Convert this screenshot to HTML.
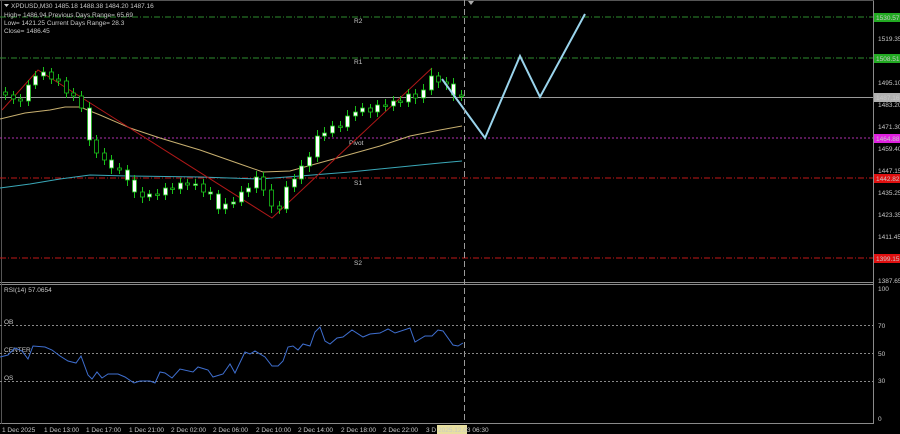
<!DOCTYPE html>
<html><head><meta charset="utf-8"><style>
html,body{margin:0;padding:0;background:#000;width:900px;height:434px;overflow:hidden}
svg{display:block}
text{font-family:"Liberation Sans",sans-serif;font-size:6.5px;fill:#c8c8c8}
.b{fill:#fff;stroke:#19c019;stroke-width:0.8}
.r{fill:#000;stroke:#19c019;stroke-width:0.8}
</style></head><body>
<svg width="900" height="434" xmlns="http://www.w3.org/2000/svg">
<rect width="900" height="434" fill="#000"/>
<line x1="873.5" y1="0" x2="873.5" y2="424" stroke="#8a8a8a"/>
<line x1="0" y1="282.5" x2="874" y2="282.5" stroke="#8a8a8a"/>
<line x1="0" y1="284.5" x2="874" y2="284.5" stroke="#8a8a8a"/>
<line x1="0" y1="0.5" x2="874" y2="0.5" stroke="#555"/>
<line x1="0" y1="423.5" x2="874" y2="423.5" stroke="#8a8a8a"/>
<line x1="1.5" y1="0" x2="1.5" y2="424" stroke="#555"/>
<line x1="0" y1="17" x2="873" y2="17" stroke="#2e8b2e" stroke-dasharray="6,2,1,2"/>
<line x1="0" y1="58" x2="873" y2="58" stroke="#2e8b2e" stroke-dasharray="6,2,1,2"/>
<line x1="0" y1="97.5" x2="873" y2="97.5" stroke="#9a9a9a"/>
<line x1="0" y1="138" x2="873" y2="138" stroke="#b030b0" stroke-dasharray="2,2"/>
<line x1="0" y1="178" x2="873" y2="178" stroke="#c01818" stroke-dasharray="6,2,1,2"/>
<line x1="0" y1="258" x2="873" y2="258" stroke="#c01818" stroke-dasharray="6,2,1,2"/>
<text x="354" y="23">R2</text><text x="354" y="64">R1</text>
<text x="349" y="145">Pivot</text><text x="354" y="185">S1</text><text x="354" y="265">S2</text>
<polyline fill="none" stroke="#c8b070" stroke-width="1" points="0,119 25,113 50,110 65,107 80,107 100,115 130,128 160,138 200,150 240,164 263,172 290,171 330,160 380,146 410,136 440,130 462,126"/>
<polyline fill="none" stroke="#3aa8b8" stroke-width="1" points="0,188 30,184 60,179 90,175 130,176 200,177 260,179 300,176 350,172 400,167 440,163 462,161"/>
<polyline fill="none" stroke="#b01818" stroke-width="1" points="2,110 38,70 272,218 432,68"/>
<path fill="none" stroke="#19c019" stroke-width="1" d="M5.5 87V100M13.5 91V104M20.5 94V107M28.5 80V106M35.5 71V89M43.5 67V80M51.5 68V84M58.5 74V86M66.5 77V98M73.5 88V101M81.5 91V112M89.5 102V146M96.5 135V158M104.5 148V165M111.5 155V174M119.5 163V174M127.5 165V186M134.5 175V198M142.5 187V203M149.5 190V201M157.5 189V200M165.5 183V200M172.5 183V194M180.5 178V194M187.5 179V190M195.5 179V190M203.5 179V197M210.5 187V200M218.5 190V214M225.5 198V214M233.5 197V208M241.5 186V206M248.5 183V197M256.5 171V193M263.5 172V196M271.5 184V213M279.5 201V214M286.5 181V213M294.5 174V192M301.5 160V184M309.5 152V172M317.5 130V162M324.5 127V141M332.5 121V137M340.5 121V132M347.5 110V131M355.5 106V121M362.5 103V116M370.5 104V118M377.5 100V117M385.5 99V111M393.5 96V111M400.5 96V107M408.5 89V107M415.5 89V104M423.5 84V103M431.5 68V95M438.5 72V88M446.5 77V90M453.5 78V101M461.5 90V101"/>
<rect class="r" x="3.5" y="92" width="4" height="3"/>
<rect class="r" x="11.5" y="95" width="4" height="4"/>
<rect class="r" x="18.5" y="99" width="4" height="2"/>
<rect class="b" x="26.5" y="85" width="4" height="16"/>
<rect class="b" x="33.5" y="76" width="4" height="9"/>
<rect class="b" x="41.5" y="72" width="4" height="4"/>
<rect class="r" x="49.5" y="72" width="4" height="7"/>
<rect class="r" x="56.5" y="79" width="4" height="2"/>
<rect class="r" x="64.5" y="81" width="4" height="12"/>
<rect class="r" x="71.5" y="93" width="4" height="3"/>
<rect class="r" x="79.5" y="96" width="4" height="12"/>
<rect class="b" x="87.5" y="108" width="4" height="32"/>
<rect class="r" x="94.5" y="140" width="4" height="13"/>
<rect class="r" x="102.5" y="153" width="4" height="7"/>
<rect class="b" x="109.5" y="160" width="4" height="8"/>
<rect class="r" x="117.5" y="168" width="4" height="2"/>
<rect class="b" x="125.5" y="170" width="4" height="10"/>
<rect class="b" x="132.5" y="180" width="4" height="12"/>
<rect class="r" x="140.5" y="192" width="4" height="5"/>
<rect class="b" x="147.5" y="194" width="4" height="3"/>
<rect class="r" x="155.5" y="194" width="4" height="1.5"/>
<rect class="b" x="163.5" y="188" width="4" height="7"/>
<rect class="r" x="170.5" y="188" width="4" height="1.5"/>
<rect class="b" x="178.5" y="183" width="4" height="6"/>
<rect class="r" x="185.5" y="183" width="4" height="2"/>
<rect class="b" x="193.5" y="184" width="4" height="1.5"/>
<rect class="r" x="201.5" y="184" width="4" height="8"/>
<rect class="b" x="208.5" y="192" width="4" height="2"/>
<rect class="b" x="216.5" y="194" width="4" height="15"/>
<rect class="b" x="223.5" y="204" width="4" height="5"/>
<rect class="b" x="231.5" y="202" width="4" height="2"/>
<rect class="b" x="239.5" y="192" width="4" height="10"/>
<rect class="b" x="246.5" y="188" width="4" height="4"/>
<rect class="b" x="254.5" y="177" width="4" height="11"/>
<rect class="r" x="261.5" y="177" width="4" height="13"/>
<rect class="r" x="269.5" y="190" width="4" height="16"/>
<rect class="r" x="277.5" y="206" width="4" height="3"/>
<rect class="b" x="284.5" y="187" width="4" height="22"/>
<rect class="b" x="292.5" y="179" width="4" height="8"/>
<rect class="b" x="299.5" y="166" width="4" height="13"/>
<rect class="b" x="307.5" y="157" width="4" height="9"/>
<rect class="b" x="315.5" y="136" width="4" height="21"/>
<rect class="b" x="322.5" y="133" width="4" height="3"/>
<rect class="b" x="330.5" y="126" width="4" height="7"/>
<rect class="r" x="338.5" y="126" width="4" height="1.5"/>
<rect class="b" x="345.5" y="116" width="4" height="11"/>
<rect class="b" x="353.5" y="112" width="4" height="4"/>
<rect class="b" x="360.5" y="108" width="4" height="4"/>
<rect class="r" x="368.5" y="108" width="4" height="4"/>
<rect class="b" x="375.5" y="105" width="4" height="7"/>
<rect class="r" x="383.5" y="105" width="4" height="1.5"/>
<rect class="b" x="391.5" y="101" width="4" height="5"/>
<rect class="r" x="398.5" y="101" width="4" height="1.5"/>
<rect class="b" x="406.5" y="94" width="4" height="8"/>
<rect class="r" x="413.5" y="94" width="4" height="4"/>
<rect class="b" x="421.5" y="90" width="4" height="8"/>
<rect class="b" x="429.5" y="76" width="4" height="14"/>
<rect class="r" x="436.5" y="76" width="4" height="6"/>
<rect class="r" x="444.5" y="82" width="4" height="2"/>
<rect class="b" x="451.5" y="84" width="4" height="11"/>
<rect class="r" x="459.5" y="95" width="4" height="1.5"/>
<polyline fill="none" stroke="#9ad4ec" stroke-width="2" points="442,79 485,138 520,56 540,97 585,14"/>
<line x1="464.5" y1="0" x2="464.5" y2="424" stroke="#9a9a9a" stroke-dasharray="6,3"/>
<polygon points="468,1 474,1 471,5" fill="#aaa"/>
<polygon points="4,4 9,4 6.5,7" fill="#ccc"/>
<text x="11" y="8">XPDUSD,M30  1485.18 1488.38 1484.20 1487.16</text>
<text x="4" y="17">High= 1486.94    Previous Days Range= 65.69</text>
<text x="4" y="25">Low= 1421.25    Current Days Range= 28.3</text>
<text x="4" y="33">Close= 1486.45</text>
<rect x="874" y="13" width="26" height="9" fill="#22aa22"/><text x="876" y="20" fill="#003300">1530.57</text>
<text x="878" y="41">1519.35</text>
<rect x="874" y="54" width="26" height="9" fill="#22aa22"/><text x="876" y="61" fill="#003300">1508.51</text>
<text x="878" y="85">1495.10</text>
<rect x="874" y="93" width="26" height="9" fill="#b0b0b0"/><text x="876" y="100" fill="#222">1487.16</text>
<text x="878" y="107">1483.20</text>
<text x="878" y="129">1471.30</text>
<rect x="874" y="134" width="26" height="9" fill="#e020e0"/><text x="876" y="141" fill="#500050">1464.88</text>
<text x="878" y="151">1459.40</text>
<text x="878" y="173">1447.15</text>
<rect x="874" y="174" width="26" height="9" fill="#e01010"/><text x="876" y="181" fill="#500000">1442.82</text>
<text x="878" y="195">1435.25</text>
<text x="878" y="217">1423.35</text>
<text x="878" y="239">1411.45</text>
<rect x="874" y="254" width="26" height="9" fill="#e01010"/><text x="876" y="261" fill="#500000">1399.15</text>
<text x="878" y="283">1387.65</text>
<text x="878" y="291">100</text>
<text x="878" y="328">70</text>
<text x="878" y="356">50</text>
<text x="878" y="383">30</text>
<text x="878" y="421">0</text>
<text x="4" y="292">RSI(14) 57.0654</text>
<line x1="0" y1="325.5" x2="873" y2="325.5" stroke="#888" stroke-dasharray="2,2"/>
<line x1="0" y1="353.5" x2="873" y2="353.5" stroke="#888" stroke-dasharray="2,2"/>
<line x1="0" y1="381.5" x2="873" y2="381.5" stroke="#888" stroke-dasharray="2,2"/>
<text x="4" y="324">OB</text><text x="4" y="352">CENTER</text><text x="4" y="380">OS</text>
<polyline fill="none" stroke="#3f6fd0" stroke-width="1" points="0,357 8,355 15,348 22,351 28,359 33,346 45,347 52,350 60,356 68,361 76,363 81,356 88,375 92,379 97,372 102,378 108,374 118,374 125,377 134,383 140,381 150,381 155,383 160,372 165,373 172,378 180,369 193,372 198,367 208,370 213,377 223,374 230,364 235,373 245,352 250,354 255,351 265,357 272,366 278,366 283,361 288,347 293,346 298,350 303,344 310,346 315,332 320,327 325,341 330,344 337,338 343,337 352,330 363,337 370,334 380,333 388,329 395,333 410,328 415,342 425,336 432,336 438,330 443,331 453,345 458,346 463,343"/>
<text x="2" y="432" font-size="6">1 Dec 2025</text><text x="44" y="432" font-size="6">1 Dec 13:00</text><text x="86" y="432" font-size="6">1 Dec 17:00</text>
<text x="129" y="432" font-size="6">1 Dec 21:00</text><text x="171" y="432" font-size="6">2 Dec 02:00</text><text x="213" y="432" font-size="6">2 Dec 06:00</text>
<text x="256" y="432" font-size="6">2 Dec 10:00</text><text x="298" y="432" font-size="6">2 Dec 14:00</text><text x="341" y="432" font-size="6">2 Dec 18:00</text>
<text x="383" y="432" font-size="6">2 Dec 22:00</text><text x="426" y="432" font-size="6">3 D</text>
<rect x="437" y="425" width="30" height="9" fill="#e8e0a0"/><text x="438" y="432" font-size="6" fill="#222">2025.12.03 06:30</text>
</svg>
</body></html>
